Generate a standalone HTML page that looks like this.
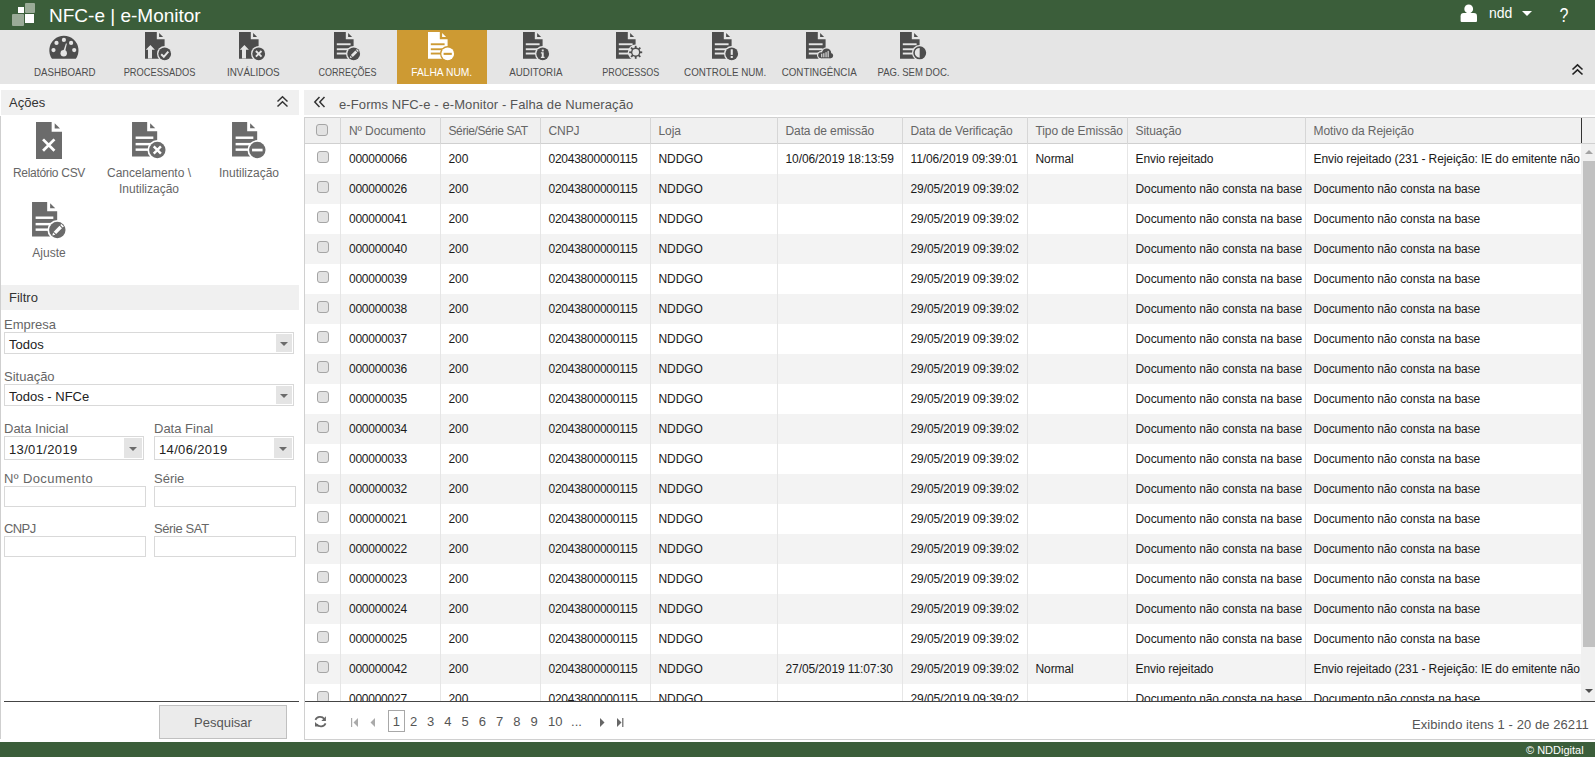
<!DOCTYPE html>
<html><head><meta charset="utf-8">
<style>
*{margin:0;padding:0;box-sizing:border-box}
html,body{width:1595px;height:757px;overflow:hidden;background:#fff;font-family:"Liberation Sans",sans-serif;position:relative}
.abs{position:absolute}
.navlbl{position:absolute;top:65px;width:120px;text-align:center;font-size:11px;line-height:14px;white-space:nowrap}
.flbl{position:absolute;font-size:13px;color:#666;line-height:15px;white-space:nowrap}
.inp{position:absolute;border:1px solid #d9d9d9;background:#fff;box-sizing:content-box}
.itxt{position:absolute;left:4px;top:4px;font-size:13px;line-height:15px;color:#222;white-space:nowrap}
.dd{position:absolute;right:1px;top:1px;bottom:1px;background:#e4e4e4}
.dd i{position:absolute;left:50%;top:50%;margin-left:-4px;margin-top:-1px;border-left:4px solid transparent;border-right:4px solid transparent;border-top:4px solid #6b6b6b}
.row{position:absolute;left:305px;width:1276px;height:30px}
.cb{position:absolute;width:12px;height:12px;border:1px solid #a5a5a5;border-radius:3px;background:#e2e2e2}
.cell{position:absolute;font-size:12px;line-height:30px;color:#1a1a1a;white-space:nowrap;letter-spacing:-0.1px}
.dg{letter-spacing:-0.25px}
.hcell{position:absolute;top:118px;font-size:12px;line-height:27px;color:#666;white-space:nowrap;letter-spacing:-0.1px}
.vl{position:absolute;width:1px}
.pg{position:absolute;top:711px;width:30px;text-align:center;font-size:13px;line-height:22px;color:#555}
.act{position:absolute;width:100px;text-align:center;font-size:12px;line-height:16px;color:#666}
</style></head><body>
<!-- header -->
<div class="abs" style="left:0;top:0;width:1595px;height:30px;background:#3b5e3a"></div>
<div class="abs" style="left:18px;top:7px;width:6px;height:6px;background:#fff"></div>
<div class="abs" style="left:25px;top:3px;width:10px;height:10px;background:#9aab97;border-radius:1px"></div>
<div class="abs" style="left:12px;top:14px;width:12px;height:12px;background:#9aab97;border-radius:1px"></div>
<div class="abs" style="left:25px;top:14px;width:9px;height:9px;background:#fff"></div>
<div class="abs" style="left:49px;top:4px;font-size:19px;line-height:24px;color:#fff;white-space:nowrap">NFC-e | e-Monitor</div>
<svg class="abs" style="left:1460px;top:4px" width="18" height="19" viewBox="0 0 18 19">
<circle cx="8.7" cy="4.9" r="4.4" fill="#fff"/><path d="M0.6 16.9V12.2Q0.6 9.1 3.7 9.1H13.9Q17 9.1 17 12.2V16.9Q17 17.9 16 17.9H1.6Q0.6 17.9 0.6 16.9Z" fill="#fff"/></svg>
<div class="abs" style="left:1489px;top:5px;font-size:14px;line-height:17px;color:#fff">ndd</div>
<div class="abs" style="left:1522px;top:10.5px;width:0;height:0;border-left:5px solid transparent;border-right:5px solid transparent;border-top:5.5px solid #fff"></div>
<div class="abs" style="left:1558px;top:3.5px;width:12px;text-align:center;font-size:20px;line-height:22px;color:#fff;transform:scaleX(0.8)">?</div>
<!-- nav -->
<div class="abs" style="left:0;top:30px;width:1595px;height:54px;background:#e5e5e5"></div>
<div class="navlbl" style="left:4.8px;color:#4d4d4d"><span style="display:inline-block;transform:scaleX(0.882)">DASHBOARD</span></div><div class="navlbl" style="left:99.1px;color:#4d4d4d"><span style="display:inline-block;transform:scaleX(0.844)">PROCESSADOS</span></div><svg style="position:absolute;left:145.1px;top:31.5px" width="28.0" height="30.0" viewBox="0 0 28 30"><path d="M0 0H11.8V7.3H19.6V26.8H0Z" fill="#4d4d4d"/><path d="M14.1 0.9V4.9H18.1Z" fill="#4d4d4d"/><path d="M5.4 12.9L9.9 17.7H7V26.5H3V17.7H0.8Z" fill="#e5e5e5"/><circle cx="19.7" cy="21.8" r="7.7" fill="#e5e5e5"/><circle cx="19.7" cy="21.8" r="6.4" fill="#4d4d4d"/><path d="M16.2 22.3L18.8 24.8L23.3 19.6" fill="none" stroke="#e5e5e5" stroke-width="2"/></svg><div class="navlbl" style="left:193.4px;color:#4d4d4d"><span style="display:inline-block;transform:scaleX(0.898)">INVÁLIDOS</span></div><svg style="position:absolute;left:239.3px;top:31.5px" width="28.0" height="30.0" viewBox="0 0 28 30"><path d="M0 0H11.8V7.3H19.6V26.8H0Z" fill="#4d4d4d"/><path d="M14.1 0.9V4.9H18.1Z" fill="#4d4d4d"/><path d="M5.4 12.9L9.9 17.7H7V26.5H3V17.7H0.8Z" fill="#e5e5e5"/><circle cx="19.7" cy="21.8" r="7.7" fill="#e5e5e5"/><circle cx="19.7" cy="21.8" r="6.4" fill="#4d4d4d"/><path d="M16.9 19L22.5 24.6M22.5 19L16.9 24.6" fill="none" stroke="#e5e5e5" stroke-width="1.9"/></svg><div class="navlbl" style="left:287.7px;color:#4d4d4d"><span style="display:inline-block;transform:scaleX(0.818)">CORREÇÕES</span></div><svg style="position:absolute;left:333.8px;top:31.5px" width="28.0" height="30.0" viewBox="0 0 28 30"><path d="M0 0H11.8V7.3H19.6V26.8H0Z" fill="#4d4d4d"/><path d="M14.1 0.9V4.9H18.1Z" fill="#4d4d4d"/><rect x="2.8" y="11.3" width="13.8" height="1.9" fill="#e5e5e5"/><rect x="2.8" y="16.3" width="13.8" height="1.9" fill="#e5e5e5"/><rect x="2.8" y="20.6" width="13.8" height="1.9" fill="#e5e5e5"/><circle cx="19.7" cy="21.8" r="7.7" fill="#e5e5e5"/><circle cx="19.7" cy="21.8" r="6.4" fill="#4d4d4d"/><path d="M15.8 26.1L16.4 23.7L18.2 25.5Z M16.9 23.1L21.4 18.6L23.3 20.5L18.8 25Z M22 18L22.9 17.1L24.8 19L23.9 19.9Z" fill="#e5e5e5"/></svg><div style="position:absolute;left:397px;top:30px;width:90px;height:54px;background:#cd9a33"></div><div class="navlbl" style="left:382.0px;color:#ffffff"><span style="display:inline-block;transform:scaleX(0.933)">FALHA NUM.</span></div><svg style="position:absolute;left:427.6px;top:31.5px" width="28.0" height="30.0" viewBox="0 0 28 30"><path d="M0 0H11.8V7.3H19.6V26.8H0Z" fill="#ffffff"/><path d="M14.1 0.9V4.9H18.1Z" fill="#ffffff"/><rect x="2.8" y="11.3" width="13.8" height="1.9" fill="#cd9a33"/><rect x="2.8" y="16.3" width="13.8" height="1.9" fill="#cd9a33"/><rect x="2.8" y="20.6" width="13.8" height="1.9" fill="#cd9a33"/><circle cx="19.7" cy="21.8" r="7.7" fill="#cd9a33"/><circle cx="19.7" cy="21.8" r="6.4" fill="#ffffff"/><rect x="15.6" y="20.8" width="8.2" height="2.1" fill="#cd9a33"/></svg><div class="navlbl" style="left:476.3px;color:#4d4d4d"><span style="display:inline-block;transform:scaleX(0.891)">AUDITORIA</span></div><svg style="position:absolute;left:522.9px;top:31.5px" width="28.0" height="30.0" viewBox="0 0 28 30"><path d="M0 0H11.8V7.3H19.6V26.8H0Z" fill="#4d4d4d"/><path d="M14.1 0.9V4.9H18.1Z" fill="#4d4d4d"/><rect x="2.8" y="11.3" width="13.8" height="1.9" fill="#e5e5e5"/><rect x="2.8" y="16.3" width="13.8" height="1.9" fill="#e5e5e5"/><rect x="2.8" y="20.6" width="13.8" height="1.9" fill="#e5e5e5"/><circle cx="19.7" cy="21.8" r="7.7" fill="#e5e5e5"/><circle cx="19.7" cy="21.8" r="6.4" fill="#4d4d4d"/><rect x="18.8" y="17.5" width="1.9" height="1.9" fill="#e5e5e5"/><path d="M17.9 20.3H20.7V24.8H21.6V26H17.9V24.8H18.8V21.5H17.9Z" fill="#e5e5e5"/></svg><div class="navlbl" style="left:570.6px;color:#4d4d4d"><span style="display:inline-block;transform:scaleX(0.818)">PROCESSOS</span></div><svg style="position:absolute;left:616.2px;top:31.5px" width="28.0" height="30.0" viewBox="0 0 28 30"><path d="M0 0H11.8V7.3H19.6V26.8H0Z" fill="#4d4d4d"/><path d="M14.1 0.9V4.9H18.1Z" fill="#4d4d4d"/><rect x="2.8" y="11.3" width="13.8" height="1.9" fill="#e5e5e5"/><rect x="2.8" y="16.3" width="13.8" height="1.9" fill="#e5e5e5"/><rect x="2.8" y="20.6" width="13.8" height="1.9" fill="#e5e5e5"/><circle cx="19.7" cy="20.3" r="7.9" fill="#e5e5e5"/><g transform="translate(19.7 20.3)" fill="#4d4d4d"><rect x="-0.9" y="-6.5" width="1.8" height="2.6" transform="rotate(0)"/><rect x="-0.9" y="-6.5" width="1.8" height="2.6" transform="rotate(45)"/><rect x="-0.9" y="-6.5" width="1.8" height="2.6" transform="rotate(90)"/><rect x="-0.9" y="-6.5" width="1.8" height="2.6" transform="rotate(135)"/><rect x="-0.9" y="-6.5" width="1.8" height="2.6" transform="rotate(180)"/><rect x="-0.9" y="-6.5" width="1.8" height="2.6" transform="rotate(225)"/><rect x="-0.9" y="-6.5" width="1.8" height="2.6" transform="rotate(270)"/><rect x="-0.9" y="-6.5" width="1.8" height="2.6" transform="rotate(315)"/><circle r="4.7" fill="#4d4d4d"/><circle r="3.3" fill="#e5e5e5"/></g></svg><div class="navlbl" style="left:664.9px;color:#4d4d4d"><span style="display:inline-block;transform:scaleX(0.889)">CONTROLE NUM.</span></div><svg style="position:absolute;left:712px;top:31.5px" width="28.0" height="30.0" viewBox="0 0 28 30"><path d="M0 0H11.8V7.3H19.6V26.8H0Z" fill="#4d4d4d"/><path d="M14.1 0.9V4.9H18.1Z" fill="#4d4d4d"/><rect x="2.8" y="11.3" width="13.8" height="1.9" fill="#e5e5e5"/><rect x="2.8" y="16.3" width="13.8" height="1.9" fill="#e5e5e5"/><rect x="2.8" y="20.6" width="13.8" height="1.9" fill="#e5e5e5"/><circle cx="19.7" cy="21.8" r="7.7" fill="#e5e5e5"/><circle cx="19.7" cy="21.8" r="6.4" fill="#4d4d4d"/><rect x="18.7" y="17.3" width="2.1" height="5.6" fill="#e5e5e5"/><rect x="18.7" y="24" width="2.1" height="2" fill="#e5e5e5"/></svg><div class="navlbl" style="left:759.2px;color:#4d4d4d"><span style="display:inline-block;transform:scaleX(0.889)">CONTINGÊNCIA</span></div><svg style="position:absolute;left:806px;top:31.5px" width="28.0" height="30.0" viewBox="0 0 28 30"><path d="M0 0H11.8V7.3H19.6V26.8H0Z" fill="#4d4d4d"/><path d="M14.1 0.9V4.9H18.1Z" fill="#4d4d4d"/><rect x="2.8" y="11.3" width="13.8" height="1.9" fill="#e5e5e5"/><rect x="2.8" y="16.3" width="13.8" height="1.9" fill="#e5e5e5"/><rect x="2.8" y="20.6" width="13.8" height="1.9" fill="#e5e5e5"/><circle cx="20.6" cy="21" r="5.8" fill="#e5e5e5"/><circle cx="15.2" cy="23.3" r="4.2" fill="#e5e5e5"/><circle cx="24.4" cy="23.6" r="3.9000000000000004" fill="#e5e5e5"/><rect x="15.2" y="22.1" width="9.2" height="5.4" fill="#e5e5e5"/><circle cx="20.6" cy="21" r="4.6" fill="#4d4d4d"/><circle cx="15.2" cy="23.3" r="3" fill="#4d4d4d"/><circle cx="24.4" cy="23.6" r="2.7" fill="#4d4d4d"/><rect x="15.2" y="23.3" width="9.2" height="3" fill="#4d4d4d"/><rect x="15.2" y="21.7" width="1.1" height="3.6" fill="#e5e5e5"/><rect x="17.3" y="21.2" width="1.1" height="4.1" fill="#e5e5e5"/><rect x="19.5" y="20.2" width="1.1" height="5.1" fill="#e5e5e5"/><rect x="21.6" y="18.9" width="1.1" height="6.4" fill="#e5e5e5"/></svg><div class="navlbl" style="left:853.5px;color:#4d4d4d"><span style="display:inline-block;transform:scaleX(0.868)">PAG. SEM DOC.</span></div><svg style="position:absolute;left:900px;top:31.5px" width="28.0" height="30.0" viewBox="0 0 28 30"><path d="M0 0H11.8V7.3H19.6V26.8H0Z" fill="#4d4d4d"/><path d="M14.1 0.9V4.9H18.1Z" fill="#4d4d4d"/><rect x="2.8" y="11.3" width="13.8" height="1.9" fill="#e5e5e5"/><rect x="2.8" y="16.3" width="13.8" height="1.9" fill="#e5e5e5"/><rect x="2.8" y="20.6" width="13.8" height="1.9" fill="#e5e5e5"/><circle cx="19.7" cy="20.8" r="7.7" fill="#e5e5e5"/><circle cx="19.7" cy="20.8" r="5.7" fill="none" stroke="#4d4d4d" stroke-width="1.6"/><path d="M19.7 15.1A5.7 5.7 0 0 1 19.7 26.5Z" fill="#4d4d4d"/></svg>
<svg style="position:absolute;left:44px;top:30px" width="40" height="32" viewBox="0 0 40 32">
<path d="M8.0 28.75A14.6 14.6 0 1 1 31.8 28.75Z" fill="#4d4d4d"/>
<g fill="#e5e5e5"><circle cx="19.9" cy="9.9" r="2.1"/><circle cx="12.5" cy="12.9" r="2.1"/><circle cx="27.1" cy="12.9" r="2.1"/>
<circle cx="9.5" cy="20.1" r="2.1"/><circle cx="30.2" cy="20.1" r="2.1"/>
<circle cx="19.7" cy="23.3" r="3.2"/><path d="M18.8 22.5L21.9 13.4L22.9 13.6L20.8 23Z"/></g></svg>
<svg class="abs" style="left:1571px;top:63px" width="13" height="13" viewBox="0 0 13 13"><path d="M1.5 6.5L6.5 1.8L11.5 6.5M1.5 11.5L6.5 6.8L11.5 11.5" fill="none" stroke="#222" stroke-width="1.6"/></svg>

<!-- left panel -->
<div class="abs" style="left:0;top:116px;width:1px;height:623px;background:#cfcfcf"></div>
<div class="abs" style="left:1px;top:90px;width:298px;height:25px;background:#f0f0f0"></div>
<div class="abs" style="left:9px;top:94px;font-size:13px;line-height:17px;color:#333">Ações</div>
<svg class="abs" style="left:276px;top:95px" width="13" height="13" viewBox="0 0 13 13"><path d="M1.5 6.5L6.5 1.8L11.5 6.5M1.5 11.5L6.5 6.8L11.5 11.5" fill="none" stroke="#333" stroke-width="1.5"/></svg>

<div class="act" style="left:-1px;top:165px;letter-spacing:-0.3px">Relatório CSV</div>
<div class="act" style="left:99px;top:165px">Cancelamento \<br>Inutilização</div>
<div class="act" style="left:199px;top:165px">Inutilização</div>
<div class="act" style="left:-1px;top:245px">Ajuste</div>
<svg class="abs" style="left:36px;top:121.5px" width="26" height="37" viewBox="0 0 19.6 27.9">
<path d="M0 0H11.8V7.3H19.6V27.9H0Z" fill="#6b6b6b"/><path d="M14.1 0.9V4.9H18.1Z" fill="#6b6b6b"/>
<path d="M5.3 13.1L13.9 21.6M13.9 13.1L5.3 21.6" stroke="#fff" stroke-width="2.1"/></svg><svg class="abs" style="left:131.8px;top:121.7px" width="36" height="38.5" viewBox="0 0 28 30"><path d="M0 0H11.8V7.3H19.6V26.8H0Z" fill="#6b6b6b"/><path d="M14.1 0.9V4.9H18.1Z" fill="#6b6b6b"/><rect x="2.8" y="11.3" width="13.8" height="1.9" fill="#fff"/><rect x="2.8" y="16.3" width="13.8" height="1.9" fill="#fff"/><rect x="2.8" y="20.6" width="13.8" height="1.9" fill="#fff"/><circle cx="19.7" cy="21.8" r="7.7" fill="#fff"/><circle cx="19.7" cy="21.8" r="6.4" fill="#6b6b6b"/><path d="M16.9 19L22.5 24.6M22.5 19L16.9 24.6" fill="none" stroke="#fff" stroke-width="1.9"/></svg><svg class="abs" style="left:231.7px;top:121.7px" width="36" height="38.5" viewBox="0 0 28 30"><path d="M0 0H11.8V7.3H19.6V26.8H0Z" fill="#6b6b6b"/><path d="M14.1 0.9V4.9H18.1Z" fill="#6b6b6b"/><rect x="2.8" y="11.3" width="13.8" height="1.9" fill="#fff"/><rect x="2.8" y="16.3" width="13.8" height="1.9" fill="#fff"/><rect x="2.8" y="20.6" width="13.8" height="1.9" fill="#fff"/><circle cx="19.7" cy="21.8" r="7.7" fill="#fff"/><circle cx="19.7" cy="21.8" r="6.4" fill="#6b6b6b"/><rect x="15.6" y="20.8" width="8.2" height="2.1" fill="#fff"/></svg><svg class="abs" style="left:31.8px;top:201.9px" width="36" height="38.5" viewBox="0 0 28 30"><path d="M0 0H11.8V7.3H19.6V26.8H0Z" fill="#6b6b6b"/><path d="M14.1 0.9V4.9H18.1Z" fill="#6b6b6b"/><rect x="2.8" y="11.3" width="13.8" height="1.9" fill="#fff"/><rect x="2.8" y="16.3" width="13.8" height="1.9" fill="#fff"/><rect x="2.8" y="20.6" width="13.8" height="1.9" fill="#fff"/><circle cx="19.7" cy="21.8" r="7.7" fill="#fff"/><circle cx="19.7" cy="21.8" r="6.4" fill="#6b6b6b"/><path d="M15.8 26.1L16.4 23.7L18.2 25.5Z M16.9 23.1L21.4 18.6L23.3 20.5L18.8 25Z M22 18L22.9 17.1L24.8 19L23.9 19.9Z" fill="#fff"/></svg>

<div class="abs" style="left:1px;top:285px;width:298px;height:25px;background:#f0f0f0"></div>
<div class="abs" style="left:9px;top:289px;font-size:13px;line-height:17px;color:#333">Filtro</div>
<div class="flbl" style="left:4px;top:317px">Empresa</div>
<div class="inp" style="left:4px;top:332px;width:288px;height:20px"><span class="itxt">Todos</span><div class="dd" style="width:16px;"><i></i></div></div>
<div class="flbl" style="left:4px;top:369px">Situação</div>
<div class="inp" style="left:4px;top:384px;width:288px;height:20px"><span class="itxt">Todos - NFCe</span><div class="dd" style="width:16px;"><i></i></div></div>
<div class="flbl" style="left:4px;top:421px">Data Inicial</div>
<div class="inp" style="left:4px;top:436px;width:138px;height:22px"><span class="itxt" style="top:5px"><span style='letter-spacing:0.35px'>13/01/2019</span></span><div class="dd" style="width:18px;"><i></i></div></div>
<div class="flbl" style="left:154px;top:421px">Data Final</div>
<div class="inp" style="left:154px;top:436px;width:138px;height:22px"><span class="itxt" style="top:5px"><span style='letter-spacing:0.35px'>14/06/2019</span></span><div class="dd" style="width:18px;"><i></i></div></div>
<div class="flbl" style="left:4px;top:471px"><span style='letter-spacing:0.4px'>Nº Documento</span></div>
<div class="inp" style="left:4px;top:486px;width:140px;height:19px"></div>
<div class="flbl" style="left:154px;top:471px">Série</div>
<div class="inp" style="left:154px;top:486px;width:140px;height:19px"></div>
<div class="flbl" style="left:4px;top:521px"><span style='letter-spacing:-0.6px'>CNPJ</span></div>
<div class="inp" style="left:4px;top:536px;width:140px;height:19px"></div>
<div class="flbl" style="left:154px;top:521px"><span style='letter-spacing:-0.4px'>Série SAT</span></div>
<div class="inp" style="left:154px;top:536px;width:140px;height:19px"></div>
<div class="abs" style="left:4px;top:701px;width:295px;height:1px;background:#444"></div>
<div class="abs" style="left:159px;top:705px;width:128px;height:34px;background:#ebebeb;border:1px solid #c0c0c0;text-align:center;font-size:13px;line-height:34px;color:#555">Pesquisar</div>

<!-- main -->
<div class="abs" style="left:304px;top:90px;width:1291px;height:25px;background:#f0f0f0"></div>
<svg class="abs" style="left:313px;top:96px" width="14" height="12" viewBox="0 0 14 12"><path d="M6.5 1L1.8 6L6.5 11M11.5 1L6.8 6L11.5 11" fill="none" stroke="#333" stroke-width="1.5"/></svg>
<div class="abs" style="left:339px;top:97px;font-size:13px;line-height:16px;color:#555;white-space:nowrap;letter-spacing:0.1px">e-Forms NFC-e - e-Monitor - Falha de Numeração</div>

<div class="abs" style="left:304px;top:117px;width:1291px;height:623px;border:1px solid #d0d0d0;border-right:none"></div>
<div class="abs" style="left:305px;top:118px;width:1290px;height:25px;background:#f0f0f0"></div>
<div class="abs" style="left:305px;top:143px;width:1290px;height:1px;background:#d0d0d0"></div>
<div class="cb" style="left:316px;top:124px"></div>
<div class="row" style="top:144px;background:#ffffff"></div><div class="cb" style="left:317px;top:151px"></div><div class="cell dg" style="left:349px;top:144px">000000066</div><div class="cell" style="left:448.5px;top:144px">200</div><div class="cell dg" style="left:548.5px;top:144px">02043800000115</div><div class="cell" style="left:658.5px;top:144px">NDDGO</div><div class="cell" style="left:785.5px;top:144px">10/06/2019 18:13:59</div><div class="cell" style="left:910.5px;top:144px">11/06/2019 09:39:01</div><div class="cell" style="left:1035.5px;top:144px">Normal</div><div class="cell" style="left:1135.5px;top:144px">Envio rejeitado</div><div class="cell" style="left:1313.5px;top:144px">Envio rejeitado (231 - Rejeição: IE do emitente não</div><div class="row" style="top:174px;background:#f3f3f3"></div><div class="cb" style="left:317px;top:181px"></div><div class="cell dg" style="left:349px;top:174px">000000026</div><div class="cell" style="left:448.5px;top:174px">200</div><div class="cell dg" style="left:548.5px;top:174px">02043800000115</div><div class="cell" style="left:658.5px;top:174px">NDDGO</div><div class="cell" style="left:910.5px;top:174px">29/05/2019 09:39:02</div><div class="cell" style="left:1135.5px;top:174px">Documento não consta na base</div><div class="cell" style="left:1313.5px;top:174px">Documento não consta na base</div><div class="row" style="top:204px;background:#ffffff"></div><div class="cb" style="left:317px;top:211px"></div><div class="cell dg" style="left:349px;top:204px">000000041</div><div class="cell" style="left:448.5px;top:204px">200</div><div class="cell dg" style="left:548.5px;top:204px">02043800000115</div><div class="cell" style="left:658.5px;top:204px">NDDGO</div><div class="cell" style="left:910.5px;top:204px">29/05/2019 09:39:02</div><div class="cell" style="left:1135.5px;top:204px">Documento não consta na base</div><div class="cell" style="left:1313.5px;top:204px">Documento não consta na base</div><div class="row" style="top:234px;background:#f3f3f3"></div><div class="cb" style="left:317px;top:241px"></div><div class="cell dg" style="left:349px;top:234px">000000040</div><div class="cell" style="left:448.5px;top:234px">200</div><div class="cell dg" style="left:548.5px;top:234px">02043800000115</div><div class="cell" style="left:658.5px;top:234px">NDDGO</div><div class="cell" style="left:910.5px;top:234px">29/05/2019 09:39:02</div><div class="cell" style="left:1135.5px;top:234px">Documento não consta na base</div><div class="cell" style="left:1313.5px;top:234px">Documento não consta na base</div><div class="row" style="top:264px;background:#ffffff"></div><div class="cb" style="left:317px;top:271px"></div><div class="cell dg" style="left:349px;top:264px">000000039</div><div class="cell" style="left:448.5px;top:264px">200</div><div class="cell dg" style="left:548.5px;top:264px">02043800000115</div><div class="cell" style="left:658.5px;top:264px">NDDGO</div><div class="cell" style="left:910.5px;top:264px">29/05/2019 09:39:02</div><div class="cell" style="left:1135.5px;top:264px">Documento não consta na base</div><div class="cell" style="left:1313.5px;top:264px">Documento não consta na base</div><div class="row" style="top:294px;background:#f3f3f3"></div><div class="cb" style="left:317px;top:301px"></div><div class="cell dg" style="left:349px;top:294px">000000038</div><div class="cell" style="left:448.5px;top:294px">200</div><div class="cell dg" style="left:548.5px;top:294px">02043800000115</div><div class="cell" style="left:658.5px;top:294px">NDDGO</div><div class="cell" style="left:910.5px;top:294px">29/05/2019 09:39:02</div><div class="cell" style="left:1135.5px;top:294px">Documento não consta na base</div><div class="cell" style="left:1313.5px;top:294px">Documento não consta na base</div><div class="row" style="top:324px;background:#ffffff"></div><div class="cb" style="left:317px;top:331px"></div><div class="cell dg" style="left:349px;top:324px">000000037</div><div class="cell" style="left:448.5px;top:324px">200</div><div class="cell dg" style="left:548.5px;top:324px">02043800000115</div><div class="cell" style="left:658.5px;top:324px">NDDGO</div><div class="cell" style="left:910.5px;top:324px">29/05/2019 09:39:02</div><div class="cell" style="left:1135.5px;top:324px">Documento não consta na base</div><div class="cell" style="left:1313.5px;top:324px">Documento não consta na base</div><div class="row" style="top:354px;background:#f3f3f3"></div><div class="cb" style="left:317px;top:361px"></div><div class="cell dg" style="left:349px;top:354px">000000036</div><div class="cell" style="left:448.5px;top:354px">200</div><div class="cell dg" style="left:548.5px;top:354px">02043800000115</div><div class="cell" style="left:658.5px;top:354px">NDDGO</div><div class="cell" style="left:910.5px;top:354px">29/05/2019 09:39:02</div><div class="cell" style="left:1135.5px;top:354px">Documento não consta na base</div><div class="cell" style="left:1313.5px;top:354px">Documento não consta na base</div><div class="row" style="top:384px;background:#ffffff"></div><div class="cb" style="left:317px;top:391px"></div><div class="cell dg" style="left:349px;top:384px">000000035</div><div class="cell" style="left:448.5px;top:384px">200</div><div class="cell dg" style="left:548.5px;top:384px">02043800000115</div><div class="cell" style="left:658.5px;top:384px">NDDGO</div><div class="cell" style="left:910.5px;top:384px">29/05/2019 09:39:02</div><div class="cell" style="left:1135.5px;top:384px">Documento não consta na base</div><div class="cell" style="left:1313.5px;top:384px">Documento não consta na base</div><div class="row" style="top:414px;background:#f3f3f3"></div><div class="cb" style="left:317px;top:421px"></div><div class="cell dg" style="left:349px;top:414px">000000034</div><div class="cell" style="left:448.5px;top:414px">200</div><div class="cell dg" style="left:548.5px;top:414px">02043800000115</div><div class="cell" style="left:658.5px;top:414px">NDDGO</div><div class="cell" style="left:910.5px;top:414px">29/05/2019 09:39:02</div><div class="cell" style="left:1135.5px;top:414px">Documento não consta na base</div><div class="cell" style="left:1313.5px;top:414px">Documento não consta na base</div><div class="row" style="top:444px;background:#ffffff"></div><div class="cb" style="left:317px;top:451px"></div><div class="cell dg" style="left:349px;top:444px">000000033</div><div class="cell" style="left:448.5px;top:444px">200</div><div class="cell dg" style="left:548.5px;top:444px">02043800000115</div><div class="cell" style="left:658.5px;top:444px">NDDGO</div><div class="cell" style="left:910.5px;top:444px">29/05/2019 09:39:02</div><div class="cell" style="left:1135.5px;top:444px">Documento não consta na base</div><div class="cell" style="left:1313.5px;top:444px">Documento não consta na base</div><div class="row" style="top:474px;background:#f3f3f3"></div><div class="cb" style="left:317px;top:481px"></div><div class="cell dg" style="left:349px;top:474px">000000032</div><div class="cell" style="left:448.5px;top:474px">200</div><div class="cell dg" style="left:548.5px;top:474px">02043800000115</div><div class="cell" style="left:658.5px;top:474px">NDDGO</div><div class="cell" style="left:910.5px;top:474px">29/05/2019 09:39:02</div><div class="cell" style="left:1135.5px;top:474px">Documento não consta na base</div><div class="cell" style="left:1313.5px;top:474px">Documento não consta na base</div><div class="row" style="top:504px;background:#ffffff"></div><div class="cb" style="left:317px;top:511px"></div><div class="cell dg" style="left:349px;top:504px">000000021</div><div class="cell" style="left:448.5px;top:504px">200</div><div class="cell dg" style="left:548.5px;top:504px">02043800000115</div><div class="cell" style="left:658.5px;top:504px">NDDGO</div><div class="cell" style="left:910.5px;top:504px">29/05/2019 09:39:02</div><div class="cell" style="left:1135.5px;top:504px">Documento não consta na base</div><div class="cell" style="left:1313.5px;top:504px">Documento não consta na base</div><div class="row" style="top:534px;background:#f3f3f3"></div><div class="cb" style="left:317px;top:541px"></div><div class="cell dg" style="left:349px;top:534px">000000022</div><div class="cell" style="left:448.5px;top:534px">200</div><div class="cell dg" style="left:548.5px;top:534px">02043800000115</div><div class="cell" style="left:658.5px;top:534px">NDDGO</div><div class="cell" style="left:910.5px;top:534px">29/05/2019 09:39:02</div><div class="cell" style="left:1135.5px;top:534px">Documento não consta na base</div><div class="cell" style="left:1313.5px;top:534px">Documento não consta na base</div><div class="row" style="top:564px;background:#ffffff"></div><div class="cb" style="left:317px;top:571px"></div><div class="cell dg" style="left:349px;top:564px">000000023</div><div class="cell" style="left:448.5px;top:564px">200</div><div class="cell dg" style="left:548.5px;top:564px">02043800000115</div><div class="cell" style="left:658.5px;top:564px">NDDGO</div><div class="cell" style="left:910.5px;top:564px">29/05/2019 09:39:02</div><div class="cell" style="left:1135.5px;top:564px">Documento não consta na base</div><div class="cell" style="left:1313.5px;top:564px">Documento não consta na base</div><div class="row" style="top:594px;background:#f3f3f3"></div><div class="cb" style="left:317px;top:601px"></div><div class="cell dg" style="left:349px;top:594px">000000024</div><div class="cell" style="left:448.5px;top:594px">200</div><div class="cell dg" style="left:548.5px;top:594px">02043800000115</div><div class="cell" style="left:658.5px;top:594px">NDDGO</div><div class="cell" style="left:910.5px;top:594px">29/05/2019 09:39:02</div><div class="cell" style="left:1135.5px;top:594px">Documento não consta na base</div><div class="cell" style="left:1313.5px;top:594px">Documento não consta na base</div><div class="row" style="top:624px;background:#ffffff"></div><div class="cb" style="left:317px;top:631px"></div><div class="cell dg" style="left:349px;top:624px">000000025</div><div class="cell" style="left:448.5px;top:624px">200</div><div class="cell dg" style="left:548.5px;top:624px">02043800000115</div><div class="cell" style="left:658.5px;top:624px">NDDGO</div><div class="cell" style="left:910.5px;top:624px">29/05/2019 09:39:02</div><div class="cell" style="left:1135.5px;top:624px">Documento não consta na base</div><div class="cell" style="left:1313.5px;top:624px">Documento não consta na base</div><div class="row" style="top:654px;background:#f3f3f3"></div><div class="cb" style="left:317px;top:661px"></div><div class="cell dg" style="left:349px;top:654px">000000042</div><div class="cell" style="left:448.5px;top:654px">200</div><div class="cell dg" style="left:548.5px;top:654px">02043800000115</div><div class="cell" style="left:658.5px;top:654px">NDDGO</div><div class="cell" style="left:785.5px;top:654px">27/05/2019 11:07:30</div><div class="cell" style="left:910.5px;top:654px">29/05/2019 09:39:02</div><div class="cell" style="left:1035.5px;top:654px">Normal</div><div class="cell" style="left:1135.5px;top:654px">Envio rejeitado</div><div class="cell" style="left:1313.5px;top:654px">Envio rejeitado (231 - Rejeição: IE do emitente não</div><div class="row" style="top:684px;background:#ffffff"></div><div class="cb" style="left:317px;top:691px"></div><div class="cell dg" style="left:349px;top:684px">000000027</div><div class="cell" style="left:448.5px;top:684px">200</div><div class="cell dg" style="left:548.5px;top:684px">02043800000115</div><div class="cell" style="left:658.5px;top:684px">NDDGO</div><div class="cell" style="left:910.5px;top:684px">29/05/2019 09:39:02</div><div class="cell" style="left:1135.5px;top:684px">Documento não consta na base</div><div class="cell" style="left:1313.5px;top:684px">Documento não consta na base</div>
<div class="hcell" style="left:349px;">Nº Documento</div><div class="hcell" style="left:448.5px;letter-spacing:-0.4px;">Série/Série SAT</div><div class="hcell" style="left:548.5px;">CNPJ</div><div class="hcell" style="left:658.5px;">Loja</div><div class="hcell" style="left:785.5px;">Data de emissão</div><div class="hcell" style="left:910.5px;">Data de Verificação</div><div class="hcell" style="left:1035.5px;">Tipo de Emissão</div><div class="hcell" style="left:1135.5px;">Situação</div><div class="hcell" style="left:1313.5px;">Motivo da Rejeição</div><div class="vl" style="left:340px;top:117px;height:27px;background:#d6d6d6"></div><div class="vl" style="left:340px;top:144px;height:557px;background:#e6e6e6"></div><div class="vl" style="left:440px;top:117px;height:27px;background:#d6d6d6"></div><div class="vl" style="left:440px;top:144px;height:557px;background:#e6e6e6"></div><div class="vl" style="left:540px;top:117px;height:27px;background:#d6d6d6"></div><div class="vl" style="left:540px;top:144px;height:557px;background:#e6e6e6"></div><div class="vl" style="left:650px;top:117px;height:27px;background:#d6d6d6"></div><div class="vl" style="left:650px;top:144px;height:557px;background:#e6e6e6"></div><div class="vl" style="left:777px;top:117px;height:27px;background:#d6d6d6"></div><div class="vl" style="left:777px;top:144px;height:557px;background:#e6e6e6"></div><div class="vl" style="left:902px;top:117px;height:27px;background:#d6d6d6"></div><div class="vl" style="left:902px;top:144px;height:557px;background:#e6e6e6"></div><div class="vl" style="left:1027px;top:117px;height:27px;background:#d6d6d6"></div><div class="vl" style="left:1027px;top:144px;height:557px;background:#e6e6e6"></div><div class="vl" style="left:1127px;top:117px;height:27px;background:#d6d6d6"></div><div class="vl" style="left:1127px;top:144px;height:557px;background:#e6e6e6"></div><div class="vl" style="left:1305px;top:117px;height:27px;background:#d6d6d6"></div><div class="vl" style="left:1305px;top:144px;height:557px;background:#e6e6e6"></div>
<div class="abs" style="left:1581px;top:118px;width:1px;height:25px;background:#333"></div>
<!-- scrollbar -->
<div class="abs" style="left:1581px;top:144px;width:14px;height:557px;background:#f0f0f0"></div>
<div class="abs" style="left:1583px;top:161px;width:12px;height:486px;background:#c1c1c1"></div>
<div class="abs" style="left:1585px;top:150px;width:0;height:0;border-left:4.5px solid transparent;border-right:4.5px solid transparent;border-bottom:4.5px solid #a3a3a3"></div>
<div class="abs" style="left:1585px;top:689px;width:0;height:0;border-left:4.5px solid transparent;border-right:4.5px solid transparent;border-top:4.5px solid #505050"></div>
<!-- clip -->
<div class="abs" style="left:305px;top:702px;width:1290px;height:37px;background:#fff"></div>
<div class="abs" style="left:305px;top:701px;width:1290px;height:1px;background:#444"></div>
<!-- pager -->
<svg class="abs" style="left:314px;top:715px" width="13" height="13" viewBox="0 0 13 13"><path d="M1.4 4.9A5.2 5.2 0 0 1 10.3 4.0M11.6 8.3A5.2 5.2 0 0 1 2.7 9.2" fill="none" stroke="#666" stroke-width="1.7"/><path d="M11.9 1.3V5.9H7.3Z M1.0 7.0V11.6H5.6Z" fill="#666"/></svg>
<div class="abs" style="left:388px;top:710px;width:17px;height:22px;border:1px solid #a8a8a8"></div>
<div class="pg" style="left:381.4px">1</div><div class="pg" style="left:398.6px">2</div><div class="pg" style="left:415.7px">3</div><div class="pg" style="left:432.8px">4</div><div class="pg" style="left:450.0px">5</div><div class="pg" style="left:467.3px">6</div><div class="pg" style="left:484.5px">7</div><div class="pg" style="left:501.8px">8</div><div class="pg" style="left:519.0px">9</div><div class="pg" style="left:540.2px">10</div><div class="pg" style="left:561.5px">...</div>
<svg class="abs" style="left:349px;top:716.5px" width="12" height="11" viewBox="0 0 12 11"><rect x="2" y="1" width="1.2" height="9" fill="#aaa"/><path d="M9 1V10L4.5 5.5Z" fill="#aaa"/></svg>
<svg class="abs" style="left:367.5px;top:716.5px" width="10" height="11" viewBox="0 0 10 11"><path d="M7 1V10L2.5 5.5Z" fill="#aaa"/></svg>
<svg class="abs" style="left:597px;top:717px" width="10" height="11" viewBox="0 0 10 11"><path d="M3 1V10L7.5 5.5Z" fill="#666"/></svg>
<svg class="abs" style="left:614px;top:717px" width="12" height="11" viewBox="0 0 12 11"><path d="M3 1V10L7.5 5.5Z" fill="#666"/><rect x="8.2" y="1" width="1.2" height="9" fill="#666"/></svg>
<div class="abs" style="left:1412px;top:717px;font-size:13px;line-height:16px;color:#555;white-space:nowrap;letter-spacing:0.07px">Exibindo itens 1 - 20 de 26211</div>

<!-- footer -->
<div class="abs" style="left:0;top:742px;width:1595px;height:15px;background:#3b5e3a"></div>
<div class="abs" style="left:1526px;top:744px;font-size:11px;line-height:13px;color:#fff;white-space:nowrap">© NDDigital</div>
</body></html>
